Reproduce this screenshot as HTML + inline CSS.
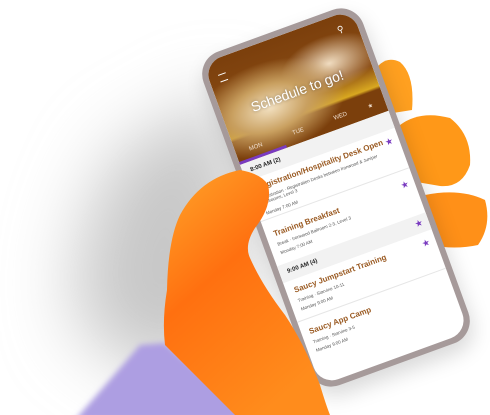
<!DOCTYPE html>
<html><head><meta charset="utf-8"><style>
html,body{margin:0;padding:0;width:490px;height:415px;overflow:hidden;background:#fff;font-family:"Liberation Sans",sans-serif}
.abs{position:absolute}
#phone{left:251px;top:20px;width:170px;height:355px;transform:rotate(-20deg);border-radius:24px;background:#a69a9a;box-shadow:0 10px 20px rgba(0,0,0,.15)}
#screen{left:6px;top:6px;width:158px;height:343px;border-radius:19px;overflow:hidden;background:#fff}
#hdr{left:0;top:0;width:158px;height:108px;background:radial-gradient(ellipse at 30% 60%,#f2e0c0 0,#c9a060 25%,rgba(0,0,0,0) 50%),radial-gradient(ellipse at 75% 40%,#f0dcc0 0,rgba(0,0,0,0) 30%),linear-gradient(#7b3f0c 0,#8a4c14 55%,#d9a820 75%,#7b3f0c 78%)}
.t{color:#fff;font-size:14px;left:0;width:158px;text-align:center;top:50px;text-shadow:0 0 3px rgba(0,0,0,.4)}
.tab{color:#f1e0d0;font-size:6px;top:94px}
.row{left:0;width:158px;border-bottom:1px solid #e6e6e6}
.ti{color:#9a5a22;font-size:8px;font-weight:bold;left:8px}
.su{color:#555;font-size:4.5px;left:8px}
.st{color:#7a3bc0;font-size:9px;right:6px}
.sec{background:#f2f2f2;left:0;width:158px;height:18px;font-size:6px;font-weight:bold;color:#222}
</style></head><body>
<svg class="abs" style="left:0;top:0" width="490" height="415">
<defs><filter id="bl" x="-50%" y="-50%" width="200%" height="200%"><feGaussianBlur stdDeviation="35"/></filter>
<filter id="bl2"><feGaussianBlur stdDeviation="4"/></filter></defs>
<path d="M230 90 L250 330 L160 380 L80 330 Q60 250 120 150 Z" fill="#c8c8c8" filter="url(#bl)"/>
<path d="M375 70 Q385 55 400 62 Q415 75 412 110 L380 115 Z" fill="#ffa020"/>
<path d="M400 125 Q420 110 450 118 Q472 135 470 165 Q462 188 440 186 L405 180 Z" fill="#ff9818"/>
<path d="M425 195 Q460 188 485 200 Q492 225 478 245 Q455 250 430 245 Z" fill="#ff9018"/>
</svg>
<div id="phone" class="abs"><div id="screen" class="abs">
<div id="hdr" class="abs"></div>
<div class="abs" style="left:10px;top:16px;width:8px;height:6px;border-top:1.5px solid #fff;border-bottom:1.5px solid #fff"></div>
<div class="abs" style="right:14px;top:10px;color:#fff;font-size:9px">⚲</div>
<div class="abs t">Schedule to go!</div>
<div class="abs tab" style="left:14px">MON</div><div class="abs tab" style="left:60px">TUE</div><div class="abs tab" style="left:104px">WED</div><div class="abs tab" style="left:140px">★</div>
<div class="abs" style="left:0;top:105px;width:50px;height:3px;background:#7a3bc0"></div>
<div class="abs sec" style="top:108px;line-height:18px;padding-left:8px">8:00 AM (2)</div>
<div class="abs row" style="top:126px;height:42px"></div>
<div class="abs ti" style="top:131px">Registration/Hospitality Desk Open</div>
<div class="abs su" style="top:144px;width:140px">Registration · Registration Desks between Ironwood &amp; Juniper Ballrooms, Level 3</div>
<div class="abs su" style="top:160px">Monday 7:00 AM</div>
<div class="abs st" style="top:132px">★</div>
<div class="abs ti" style="top:180px">Training Breakfast</div>
<div class="abs su" style="top:193px">Break · Ironwood Ballroom 2-3, Level 3</div>
<div class="abs su" style="top:202px">Monday 7:00 AM</div>
<div class="abs st" style="top:178px">★</div>
<div class="abs sec" style="top:216px;line-height:18px;padding-left:8px">9:00 AM (4)</div>
<div class="abs st" style="top:219px">★</div>
<div class="abs ti" style="top:240px">Saucy Jumpstart Training</div>
<div class="abs su" style="top:253px">Training · Starvine 10-11</div>
<div class="abs su" style="top:262px">Monday 9:00 AM</div>
<div class="abs st" style="top:240px">★</div>
<div class="abs row" style="top:274px;height:1px"></div>
<div class="abs ti" style="top:284px">Saucy App Camp</div>
<div class="abs su" style="top:297px">Training · Starvine 3-5</div>
<div class="abs su" style="top:306px">Monday 9:00 AM</div>
</div></div>
<svg class="abs" style="left:0;top:0" width="490" height="415">
<defs><linearGradient id="or2" x1="0" y1="0" x2="0.6" y2="1"><stop offset="0" stop-color="#ffa52a"/><stop offset="0.45" stop-color="#ff7010"/><stop offset="1" stop-color="#ff8c1c"/></linearGradient>
<filter id="b3"><feGaussianBlur stdDeviation="3"/></filter></defs>
<path d="M140 345 L165 343 L255 420 L75 420 Z" fill="#ad9ee2" filter="url(#b3)"/>
<path d="M240 170 Q262 174 268 185 Q273 205 255 228 Q244 245 250 258 Q262 285 285 315 Q305 345 320 385 Q326 405 330 415 L235 415 Q200 380 165 345 Q162 320 167 290 Q168 240 180 215 Q200 178 240 170 Z" fill="url(#or2)"/>
</svg>
</body></html>
